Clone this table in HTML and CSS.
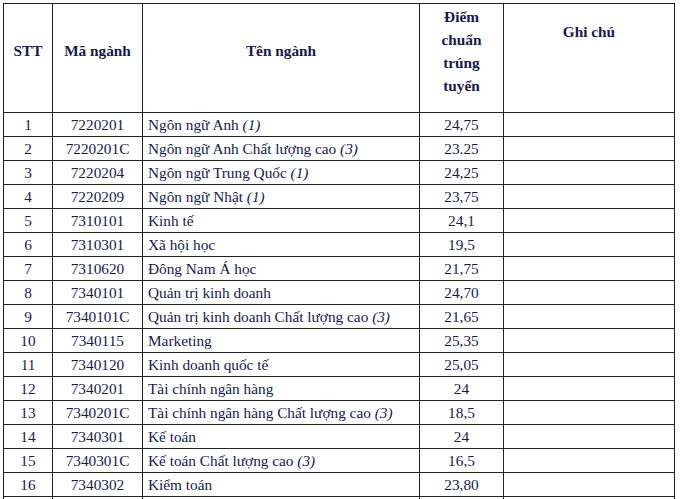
FILE: index.html
```html
<!DOCTYPE html>
<html lang="vi">
<head>
<meta charset="utf-8">
<title>Điểm chuẩn trúng tuyển</title>
<link rel="stylesheet" href="styles.css">
</head>
<body>
<table class="scores">
  <colgroup>
    <col class="c-stt">
    <col class="c-code">
    <col class="c-name">
    <col class="c-score">
    <col class="c-note">
  </colgroup>
  <thead>
    <tr class="head">
      <th>STT</th>
      <th>Mã ngành</th>
      <th>Tên ngành</th>
      <th class="score-head">Điểm chuẩn trúng tuyển</th>
      <th class="note-head">Ghi chú</th>
    </tr>
  </thead>
  <tbody>
    <tr><td>1</td><td>7220201</td><td class="name">Ngôn ngữ Anh <i>(1)</i></td><td>24,75</td><td></td></tr>
    <tr><td>2</td><td>7220201C</td><td class="name">Ngôn ngữ Anh Chất lượng cao <i>(3)</i></td><td>23.25</td><td></td></tr>
    <tr><td>3</td><td>7220204</td><td class="name">Ngôn ngữ Trung Quốc <i>(1)</i></td><td>24,25</td><td></td></tr>
    <tr><td>4</td><td>7220209</td><td class="name">Ngôn ngữ Nhật <i>(1)</i></td><td>23,75</td><td></td></tr>
    <tr><td>5</td><td>7310101</td><td class="name">Kinh tế</td><td>24,1</td><td></td></tr>
    <tr><td>6</td><td>7310301</td><td class="name">Xã hội học</td><td>19,5</td><td></td></tr>
    <tr><td>7</td><td>7310620</td><td class="name">Đông Nam Á học</td><td>21,75</td><td></td></tr>
    <tr><td>8</td><td>7340101</td><td class="name">Quản trị kinh doanh</td><td>24,70</td><td></td></tr>
    <tr><td>9</td><td>7340101C</td><td class="name">Quản trị kinh doanh Chất lượng cao <i>(3)</i></td><td>21,65</td><td></td></tr>
    <tr><td>10</td><td>7340115</td><td class="name">Marketing</td><td>25,35</td><td></td></tr>
    <tr><td>11</td><td>7340120</td><td class="name">Kinh doanh quốc tế</td><td>25,05</td><td></td></tr>
    <tr><td>12</td><td>7340201</td><td class="name">Tài chính ngân hàng</td><td>24</td><td></td></tr>
    <tr><td>13</td><td>7340201C</td><td class="name">Tài chính ngân hàng Chất lượng cao <i>(3)</i></td><td>18,5</td><td></td></tr>
    <tr><td>14</td><td>7340301</td><td class="name">Kế toán</td><td>24</td><td></td></tr>
    <tr><td>15</td><td>7340301C</td><td class="name">Kế toán Chất lượng cao <i>(3)</i></td><td>16,5</td><td></td></tr>
    <tr><td>16</td><td>7340302</td><td class="name">Kiểm toán</td><td>23,80</td><td></td></tr>
    <tr><td></td><td></td><td class="name"></td><td></td><td></td></tr>
  </tbody>
</table>
</body>
</html>
```

FILE: styles.css
```css
html, body {
  margin: 0;
  background: #ffffff;
}
body {
  padding: 3px 0 0 3px;
  font-family: "Liberation Serif", "Times New Roman", serif;
  font-size: 15.3px;
  color: #17194c;
}
.scores {
  border-collapse: collapse;
  table-layout: fixed;
  width: 671px;
}
.c-stt { width: 49px; }
.c-code { width: 90px; }
.c-name { width: 277px; }
.c-score { width: 84px; }
.c-note { width: 171px; }
.scores th,
.scores td {
  border: 1px solid #222222;
  padding: 0;
  text-align: center;
  vertical-align: middle;
}
.scores th {
  font-weight: bold;
  line-height: 19px;
}
.head { height: 109px; }
.head th { padding-bottom: 16px; }
.scores .score-head {
  line-height: 23px;
  padding: 0 12px 15px;
}
.scores .note-head {
  vertical-align: top;
  padding-top: 18px;
}
.scores tbody tr { height: 24px; }
.scores td { line-height: 18px; }
.scores td.name {
  text-align: left;
  padding-left: 5px;
  white-space: nowrap;
}
```
